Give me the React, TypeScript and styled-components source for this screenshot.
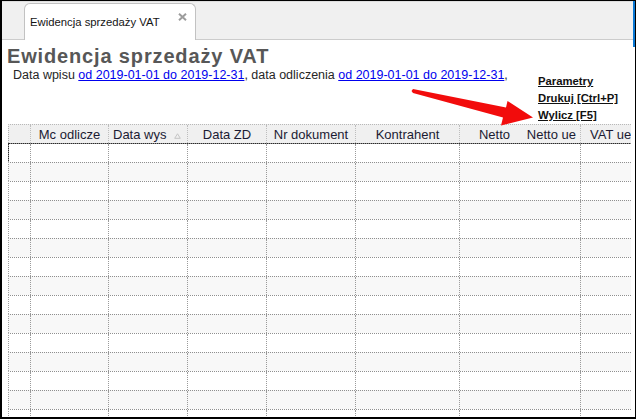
import React from 'react';
import styled, { createGlobalStyle } from 'styled-components';

const GlobalStyle = createGlobalStyle`
  html, body { margin: 0; padding: 0; background: #fff; overflow: hidden; }
  body { font-family: "Liberation Sans", Arial, sans-serif; }
`;

const COLS = '22px 78px 79px 79px 89px 104px 57px 64px 80px';

const Frame = styled.div`
  position: relative;
  width: 636px;
  height: 419px;
  box-sizing: border-box;
  border-style: solid;
  border-color: #000;
  border-width: 1px 1px 2px 2px;
  background: #fff;
  display: flex;
  flex-direction: column;
  overflow: hidden;
`;

const AccentStripe = styled.div`
  position: absolute;
  top: -1px;
  right: 0;
  width: 2px;
  height: 47px;
  background: #0a78d4;
`;

const TabBar = styled.div`
  flex: none;
  height: 39px;
  box-sizing: border-box;
  background: #f0f0f0;
  border-top: 1px solid #dedede;
  border-bottom: 1px solid #cccccc;
  display: flex;
  align-items: flex-end;
  padding-left: 22px;
`;

const Tab = styled.div`
  width: 172px;
  height: 37px;
  box-sizing: border-box;
  margin-bottom: -1px;
  background: #fff;
  border: 1px solid #c2c2c2;
  border-bottom: none;
  border-radius: 6px 6px 0 0;
  display: flex;
  align-items: flex-start;
  padding: 12px 8px 0 5px;
  font-size: 11.3px;
  line-height: 13px;
  color: #141414;
  white-space: nowrap;
`;

const CloseIcon = styled.svg`
  margin-left: auto;
  margin-top: -3px;
  flex: none;
`;

const Title = styled.h1`
  margin: 5px 0 0;
  padding-left: 5px;
  font-size: 20px;
  line-height: 22px;
  font-weight: bold;
  letter-spacing: 0.85px;
  color: #575757;
`;

const InfoRow = styled.div`
  display: flex;
  align-items: flex-start;
  margin-top: 1px;
  flex: none;
`;

const Subtitle = styled.div`
  flex: 1;
  padding-left: 11px;
  font-size: 12.5px;
  line-height: 15px;
  color: #262626;
  white-space: nowrap;
`;

const DateLink = styled.a`
  color: #0000ee;
  text-decoration: underline;
`;

const Actions = styled.div`
  flex: none;
  width: 97px;
  padding-top: 5px;
  display: flex;
  flex-direction: column;
`;

const ActionLink = styled.a`
  font-size: 11.3px;
  font-weight: bold;
  line-height: 17px;
  color: #111;
  text-decoration: underline;
  white-space: nowrap;
`;

const GridBox = styled.div`
  margin-left: 6px;
  width: 623px;
  flex: 1;
  min-height: 0;
  overflow: hidden;
`;

const HeaderRow = styled.div`
  display: grid;
  grid-template-columns: ${COLS};
  height: 19px;
  box-sizing: border-box;
  border-top: 1px dotted #b8b8b8;
  border-left: 1px dotted #b0b0b0;
  background: #f0f0f0;
`;

type Align = 'left' | 'center' | 'right';

const HeaderCell = styled.div<{ $align?: Align; $pl?: number; $pr?: number; $noBorder?: boolean }>`
  display: flex;
  align-items: center;
  justify-content: ${(p) => (p.$align === 'right' ? 'flex-end' : p.$align === 'left' ? 'flex-start' : 'center')};
  padding-left: ${(p) => p.$pl ?? 0}px;
  padding-right: ${(p) => p.$pr ?? 0}px;
  box-sizing: border-box;
  border-right: ${(p) => (p.$noBorder ? 'none' : '1px dotted #bdbdbd')};
  overflow: hidden;
  white-space: nowrap;
  min-width: 0;
  font-size: 13px;
  color: #1b1b33;
`;

const SortGlyph = styled.svg`
  flex: none;
  margin-left: 8px;
  margin-top: 3px;
`;

const Row = styled.div<{ $alt?: boolean; $focused?: boolean }>`
  position: relative;
  display: grid;
  grid-template-columns: ${COLS};
  height: 19px;
  box-sizing: border-box;
  border-top: 1px dotted #8f8f8f;
  border-left: 1px dotted #a0a0a0;
  background: ${(p) => (p.$alt ? '#f8f8f8' : '#ffffff')};

  ${(p) =>
    p.$focused &&
    `
    &::after {
      content: '';
      position: absolute;
      left: -1px;
      top: -1px;
      width: 720px;
      height: 20px;
      box-sizing: border-box;
      border: 1px dotted #2a2a2a;
      pointer-events: none;
    }
  `}
`;

const Cell = styled.div<{ $noBorder?: boolean }>`
  box-sizing: border-box;
  border-right: ${(p) => (p.$noBorder ? 'none' : '1px dotted #9a9a9a')};
`;

const ArrowOverlay = styled.svg`
  position: absolute;
  left: 398px;
  top: 84px;
  pointer-events: none;
`;

const headers: { label: string; align?: Align; pl?: number; pr?: number; noBorder?: boolean; sort?: boolean }[] = [
  { label: '' },
  { label: 'Mc odlicze', align: 'center' },
  { label: 'Data wys', align: 'left', pl: 4, sort: true },
  { label: 'Data ZD', align: 'center' },
  { label: 'Nr dokument', align: 'center' },
  { label: 'Kontrahent', align: 'center' },
  { label: 'Netto', align: 'right', pr: 7, noBorder: true },
  { label: 'Netto ue', align: 'right', pr: 4 },
  { label: 'VAT ue', align: 'left', pl: 9 },
];

const ROWS = 15;

export default function App() {
  return (
    <>
      <GlobalStyle />
      <Frame>
        <TabBar>
          <Tab>
            <span>Ewidencja sprzedaży VAT</span>
            <CloseIcon width="9" height="8" viewBox="0 0 9 8">
              <path d="M1 0.8 L8 7.2 M8 0.8 L1 7.2" stroke="#9c9c9c" strokeWidth="2" />
            </CloseIcon>
          </Tab>
        </TabBar>
        <AccentStripe />

        <Title>Ewidencja sprzedaży VAT</Title>

        <InfoRow>
          <Subtitle>
            Data wpisu <DateLink>od 2019-01-01 do 2019-12-31</DateLink>, data odliczenia{' '}
            <DateLink>od 2019-01-01 do 2019-12-31</DateLink>,
          </Subtitle>
          <Actions>
            <ActionLink>Parametry</ActionLink>
            <ActionLink>Drukuj [Ctrl+P]</ActionLink>
            <ActionLink>Wylicz [F5]</ActionLink>
          </Actions>
        </InfoRow>

        <GridBox>
          <HeaderRow>
            {headers.map((h, i) => (
              <HeaderCell key={i} $align={h.align} $pl={h.pl} $pr={h.pr} $noBorder={h.noBorder}>
                {h.label}
                {h.sort && (
                  <SortGlyph width="7" height="6" viewBox="0 0 7 6">
                    <path d="M3.5 0.8 L6.3 5.3 L0.7 5.3 Z" fill="none" stroke="#c4c4c4" strokeWidth="1" />
                  </SortGlyph>
                )}
              </HeaderCell>
            ))}
          </HeaderRow>
          {Array.from({ length: ROWS }).map((_, r) => (
            <Row key={r} $alt={r % 2 === 1} $focused={r === 0}>
              {headers.map((h, c) => (
                <Cell key={c} $noBorder={h.noBorder} />
              ))}
            </Row>
          ))}
        </GridBox>

        <ArrowOverlay width="140" height="45" viewBox="0 0 140 45">
          <polygon
            points="13,4 106,22.5 107.5,16 133,32.5 101,40.5 103,32.5 13,8 11.5,6"
            fill="#f20c0c"
          />
        </ArrowOverlay>
      </Frame>
    </>
  );
}
